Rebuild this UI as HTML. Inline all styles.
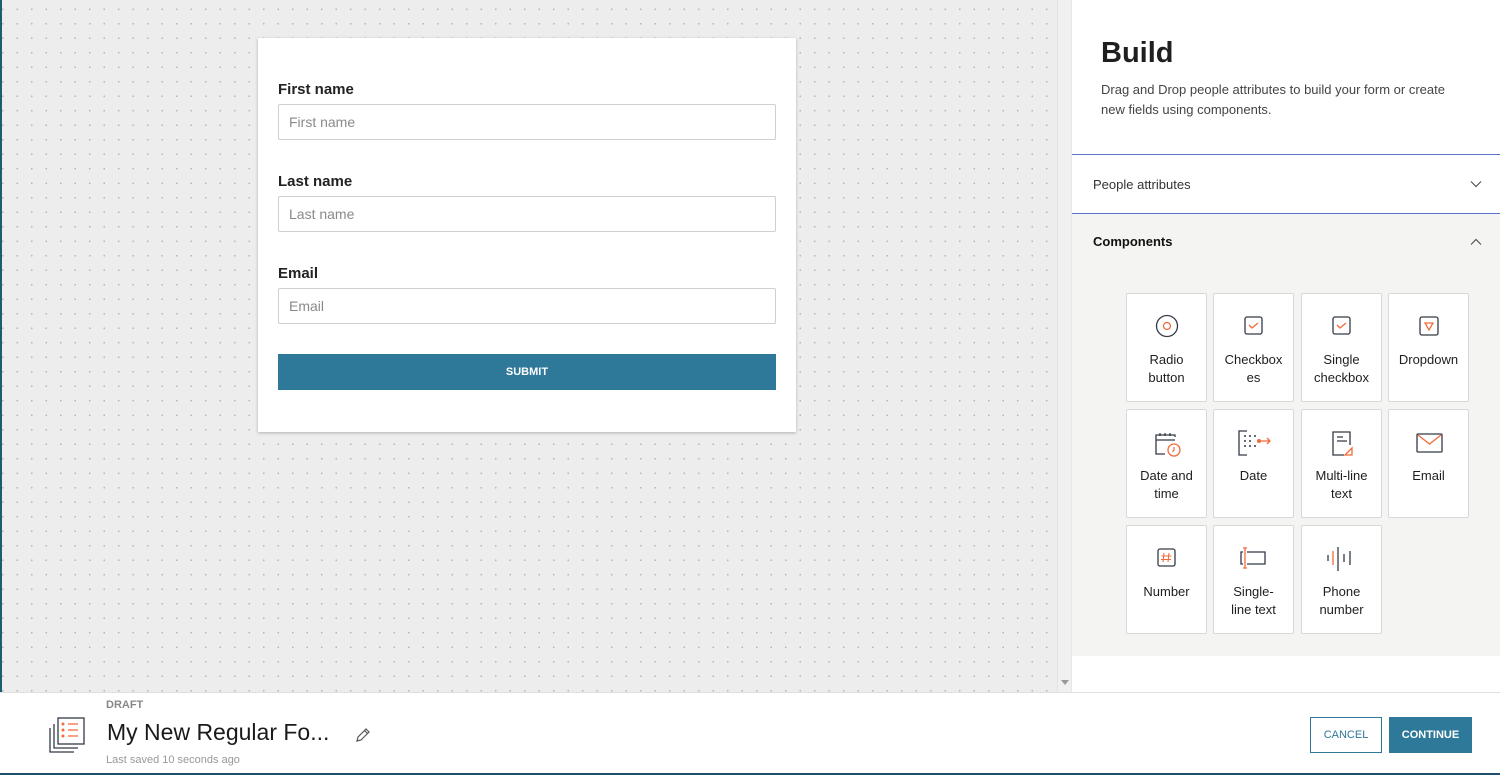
<!DOCTYPE html>
<html><head><meta charset="utf-8"><style>
*{box-sizing:border-box;margin:0;padding:0}
body{width:1500px;height:775px;overflow:hidden;font-family:"Liberation Sans",sans-serif;background:#fff;position:relative;color:#1f1f1f}
.canvas{position:absolute;left:0;top:0;width:1057px;height:692px;background-color:#ededed;background-image:radial-gradient(circle,#b5b5b5 0.8px,transparent 1px);background-size:14.5px 14.5px;background-position:8px 2px;border-left:2px solid #1d5d74}
.sb{position:absolute;left:1057px;top:0;width:14px;height:692px;background:#f0f0f0;border-left:1px solid #e3e3e3}
.card{position:absolute;left:258px;top:38px;width:538px;height:394px;background:#fff;box-shadow:0 1px 3px rgba(0,0,0,.25)}
.lbl{position:absolute;left:20px;font-size:15px;font-weight:bold;color:#222}
.inp{position:absolute;left:20px;width:498px;height:36px;border:1px solid #cfcfcf;border-radius:2px;font-size:14px;color:#8a8a8a;padding:9px 10px}
.submit{position:absolute;left:20px;top:316px;width:498px;height:36px;background:#2e7899;color:#fff;font-size:11px;font-weight:bold;text-align:center;line-height:36px}
.panel{position:absolute;left:1071px;top:0;width:429px;height:692px;background:#fff;border-left:1px solid #e6e6e6}
h1{position:absolute;left:29px;top:37px;font-size:29px;font-weight:bold;color:#1f1f1f}
.desc{position:absolute;left:29px;top:80px;width:370px;font-size:13px;line-height:20px;color:#444}
.pa{position:absolute;left:0;top:154px;width:429px;height:60px;border-top:1px solid #5b73c9;border-bottom:1px solid #5b73c9;font-size:13px;color:#333;padding:22px 21px}
.comp{position:absolute;left:0;top:214px;width:429px;height:442px;background:#f4f4f3}
.ct{position:absolute;left:21px;top:20px;font-size:13px;font-weight:bold;color:#111}
.chev{position:absolute;left:398px}
.tile{position:absolute;width:81px;height:109px;background:#fff;border:1px solid #d8d8d8;border-radius:2px;text-align:center;font-size:13px;line-height:18px;color:#1e1e1e}
.tile svg{position:absolute;left:26px;top:18px}
.tile span{position:absolute;left:0;right:0;top:57px}
.footer{position:absolute;left:0;top:692px;width:1500px;height:83px;background:#fff;border-top:1px solid #e0e0e0;border-bottom:2px solid #1d4e6a}
.btn{position:absolute;top:24px;height:36px;font-size:11px;text-align:center;line-height:34px;font-weight:bold}
</style></head><body>
<div class="canvas"></div>
<div class="sb"><div style="position:absolute;left:3px;top:680px;border:4px solid transparent;border-top:5px solid #999"></div></div>
<div class="card">
<div class="lbl" style="top:43px">First name</div><div class="inp" style="top:66px">First name</div>
<div class="lbl" style="top:135px">Last name</div><div class="inp" style="top:158px">Last name</div>
<div class="lbl" style="top:227px">Email</div><div class="inp" style="top:250px">Email</div>
<div class="submit">SUBMIT</div>
</div>
<div class="panel">
<h1>Build</h1>
<div class="desc">Drag and Drop people attributes to build your form or create new fields using components.</div>
<div class="pa">People attributes<svg class="chev" style="top:25px" width="12" height="8" viewBox="0 0 12 8"><path d="M1 1.5l5 5 5-5" fill="none" stroke="#555" stroke-width="1.2"/></svg></div>
<div class="comp">
<div class="ct">Components</div><svg class="chev" style="top:24px" width="12" height="8" viewBox="0 0 12 8"><path d="M1 6.5l5-5 5 5" fill="none" stroke="#555" stroke-width="1.2"/></svg>
<div class="tile" style="left:54px;top:79px"><svg width="28" height="28" viewBox="0 0 28 28"><circle cx="14" cy="14" r="10.5" fill="none" stroke="#333a46" stroke-width="1.3"/><circle cx="14" cy="14" r="3.5" fill="none" stroke="#f26b3a" stroke-width="1.3"/></svg><span>Radio<br>button</span></div>
<div class="tile" style="left:141px;top:79px"><svg width="28" height="28" viewBox="0 0 28 28"><rect x="5" y="5" width="17" height="17" rx="2" fill="none" stroke="#333a46" stroke-width="1.3"/><path d="M9 13l3 3 6-5" fill="none" stroke="#f26b3a" stroke-width="1.3"/></svg><span>Checkbox<br>es</span></div>
<div class="tile" style="left:229px;top:79px"><svg width="28" height="28" viewBox="0 0 28 28"><rect x="5" y="5" width="17" height="17" rx="2" fill="none" stroke="#333a46" stroke-width="1.3"/><path d="M9 13l3 3 6-5" fill="none" stroke="#f26b3a" stroke-width="1.3"/></svg><span>Single<br>checkbox</span></div>
<div class="tile" style="left:316px;top:79px"><svg width="28" height="28" viewBox="0 0 28 28"><rect x="5" y="5" width="18" height="18" rx="2" fill="none" stroke="#333a46" stroke-width="1.3"/><path d="M10 11h8l-4 7z" fill="none" stroke="#f26b3a" stroke-width="1.3"/></svg><span>Dropdown</span></div>
<div class="tile" style="left:54px;top:195px"><svg width="32" height="32" viewBox="0 0 32 32"><path d="M22 9V7H3v19h9M3 12h19M7 5v3M12 5v3M17 5v3" fill="none" stroke="#333a46" stroke-width="1.3"/><circle cx="21" cy="22" r="6" fill="none" stroke="#f26b3a" stroke-width="1.3"/><path d="M21 19v3l-1.5 2" fill="none" stroke="#f26b3a" stroke-width="1.2"/></svg><span>Date and<br>time</span></div>
<div class="tile" style="left:141px;top:195px"><svg width="36" height="30" viewBox="0 0 36 30" style="left:23px"><path d="M10 3H2v24h8" fill="none" stroke="#333a46" stroke-width="1.3"/><g fill="#333a46"><circle cx="8" cy="8" r="1"/><circle cx="13" cy="8" r="1"/><circle cx="18" cy="8" r="1"/><circle cx="8" cy="13" r="1"/><circle cx="13" cy="13" r="1"/><circle cx="8" cy="18" r="1"/><circle cx="13" cy="18" r="1"/><circle cx="18" cy="18" r="1"/></g><circle cx="22" cy="13" r="2" fill="#f26b3a"/><path d="M22 13h11M30 10l3 3-3 3" fill="none" stroke="#f26b3a" stroke-width="1.3"/></svg><span>Date</span></div>
<div class="tile" style="left:229px;top:195px"><svg width="28" height="30" viewBox="0 0 28 30"><path d="M22 17V4H5v23h11" fill="none" stroke="#333a46" stroke-width="1.3"/><path d="M9 9h6M9 13h10" stroke="#333a46" stroke-width="1.3"/><path d="M24 20v7h-7z" fill="none" stroke="#f26b3a" stroke-width="1.3"/></svg><span>Multi-line<br>text</span></div>
<div class="tile" style="left:316px;top:195px"><svg width="32" height="28" viewBox="0 0 32 28" style="left:24px"><rect x="4" y="6" width="25" height="18" rx="1" fill="none" stroke="#333a46" stroke-width="1.3"/><path d="M5 7l11.5 9L28 7" fill="none" stroke="#f26b3a" stroke-width="1.3"/></svg><span>Email</span></div>
<div class="tile" style="left:54px;top:311px"><svg width="28" height="28" viewBox="0 0 28 28"><rect x="5" y="5" width="17" height="17" rx="2" fill="none" stroke="#333a46" stroke-width="1.3"/><path d="M11 9l-1 9M16 9l-1 9M8.5 12h10M8 15.5h10" stroke="#f26b3a" stroke-width="1.1"/></svg><span>Number</span></div>
<div class="tile" style="left:141px;top:311px"><svg width="32" height="28" viewBox="0 0 32 28" style="left:24px"><path d="M5 8H3v12h2M9 8h18v12H9" fill="none" stroke="#333a46" stroke-width="1.3"/><path d="M7 4v20M5 4h4M5 24h4" stroke="#f26b3a" stroke-width="1.3"/></svg><span>Single-<br>line text</span></div>
<div class="tile" style="left:229px;top:311px"><svg width="34" height="28" viewBox="0 0 34 28" style="left:23px"><path d="M3 11v6M13 3v24M19 10v8M25 7v14" stroke="#333a46" stroke-width="1.3"/><path d="M8 7v14" stroke="#f26b3a" stroke-width="1.3"/></svg><span>Phone<br>number</span></div>
</div>
</div>
<div class="footer">
<svg width="40" height="40" viewBox="0 0 40 40" style="position:absolute;left:48px;top:22px"><path d="M2 13v24h24M6 9v24h24" fill="none" stroke="#333a46" stroke-width="1.3"/><rect x="10" y="3" width="26" height="26" fill="none" stroke="#333a46" stroke-width="1.3"/><g fill="#f26b3a"><circle cx="15" cy="9" r="1.5"/><circle cx="15" cy="15" r="1.5"/><circle cx="15" cy="21" r="1.5"/></g><path d="M20 9h10M20 15h10M20 21h10" stroke="#f26b3a" stroke-width="1.3"/></svg>
<div style="position:absolute;left:106px;top:6px;font-size:11px;font-weight:bold;color:#888">DRAFT</div>
<div style="position:absolute;left:107px;top:26px;font-size:23px;color:#1a1a1a">My New Regular Fo...</div>
<svg width="16" height="16" viewBox="0 0 16 16" style="position:absolute;left:355px;top:34px"><path d="M2 14l1-4 8-8 3 3-8 8z M9.5 3.5l3 3" fill="none" stroke="#555" stroke-width="1.2"/></svg>
<div style="position:absolute;left:106px;top:61px;font-size:11px;color:#999">Last saved 10 seconds ago</div>
<div class="btn" style="left:1310px;width:72px;border:1px solid #2e7899;color:#2e7899;font-weight:normal">CANCEL</div>
<div class="btn" style="left:1389px;width:83px;background:#2e7899;color:#fff;line-height:36px">CONTINUE</div>
</div>
</body></html>
